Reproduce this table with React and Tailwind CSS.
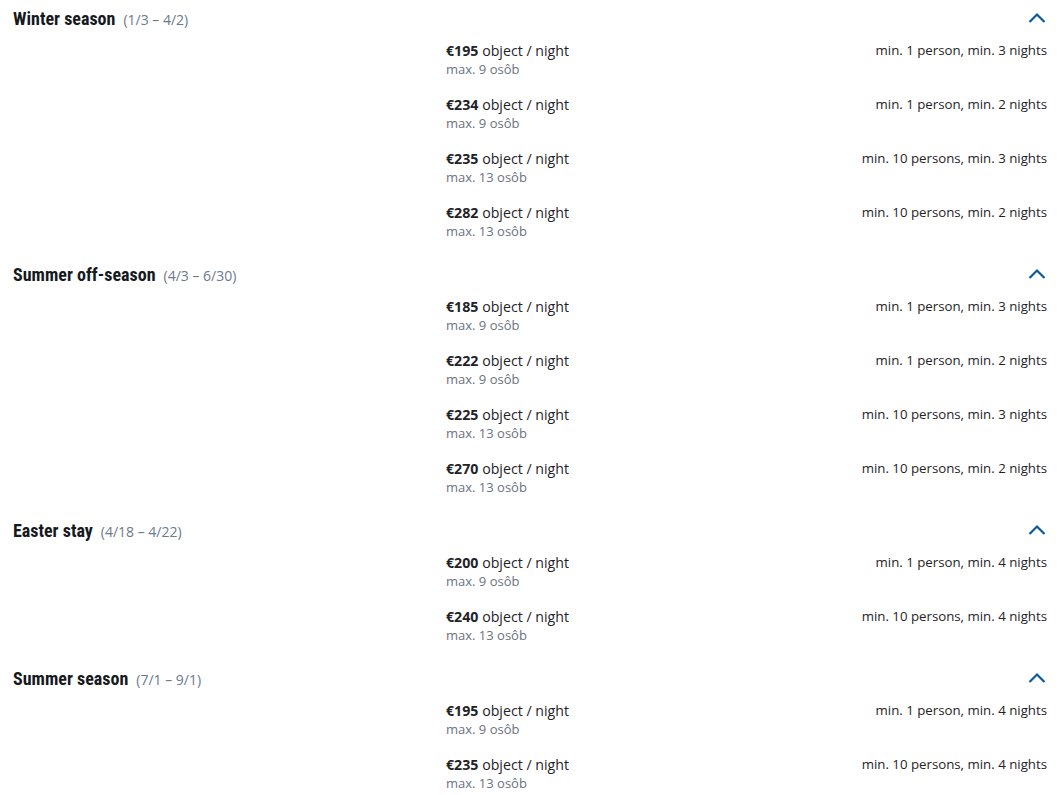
import React from 'react';

const seasons = [
  {
    name: 'Winter season',
    dates: '(1/3 – 4/2)',
    rates: [
      { price: '€195', max: 'max. 9 osôb', rule: 'min. 1 person, min. 3 nights' },
      { price: '€234', max: 'max. 9 osôb', rule: 'min. 1 person, min. 2 nights' },
      { price: '€235', max: 'max. 13 osôb', rule: 'min. 10 persons, min. 3 nights' },
      { price: '€282', max: 'max. 13 osôb', rule: 'min. 10 persons, min. 2 nights' },
    ],
  },
  {
    name: 'Summer off-season',
    dates: '(4/3 – 6/30)',
    rates: [
      { price: '€185', max: 'max. 9 osôb', rule: 'min. 1 person, min. 3 nights' },
      { price: '€222', max: 'max. 9 osôb', rule: 'min. 1 person, min. 2 nights' },
      { price: '€225', max: 'max. 13 osôb', rule: 'min. 10 persons, min. 3 nights' },
      { price: '€270', max: 'max. 13 osôb', rule: 'min. 10 persons, min. 2 nights' },
    ],
  },
  {
    name: 'Easter stay',
    dates: '(4/18 – 4/22)',
    rates: [
      { price: '€200', max: 'max. 9 osôb', rule: 'min. 1 person, min. 4 nights' },
      { price: '€240', max: 'max. 13 osôb', rule: 'min. 10 persons, min. 4 nights' },
    ],
  },
  {
    name: 'Summer season',
    dates: '(7/1 – 9/1)',
    rates: [
      { price: '€195', max: 'max. 9 osôb', rule: 'min. 1 person, min. 4 nights' },
      { price: '€235', max: 'max. 13 osôb', rule: 'min. 10 persons, min. 4 nights' },
    ],
  },
];

function Chevron() {
  return (
    <svg className="w-[18px] h-[12px] text-[#0b5aa2]" viewBox="0 0 18 12" fill="none" stroke="currentColor" strokeWidth={2.2}>
      <path d="M1.5 10L9 2.5L16.5 10" />
    </svg>
  );
}

export default function App() {
  return (
    <div className="bg-white min-h-[795px] pl-[13px] pr-[14px] font-['Open_Sans',sans-serif] text-[#1f2328]">
      {seasons.map((s) => (
        <section key={s.name}>
          {/* Season header */}
          <div className="h-[40px] flex items-start justify-between pt-[7px]">
            <div className="flex items-baseline gap-[8px]">
              <h2 className="font-['Roboto',sans-serif] font-bold text-[18px] leading-[24px] font-stretch-condensed text-[#16191d]">
                {s.name}
              </h2>
              <span className="text-[14px] text-[#6b7a8c]">{s.dates}</span>
            </div>
            <div className="pt-[5px] pr-[1px]">
              <Chevron />
            </div>
          </div>

          {/* Rates */}
          {s.rates.map((r, i) => (
            <div key={i} className="h-[54px] pt-[1px] grid grid-cols-[433px_1fr_auto]">
              <div />
              <div>
                <p className="text-[14.2px] leading-[20px]">
                  <span className="font-bold">{r.price}</span> object / night
                </p>
                <p className="text-[13px] leading-[16px] text-[#6b7280]">{r.max}</p>
              </div>
              <p className="text-[13.25px] leading-[18px] text-right">{r.rule}</p>
            </div>
          ))}
        </section>
      ))}
    </div>
  );
}
